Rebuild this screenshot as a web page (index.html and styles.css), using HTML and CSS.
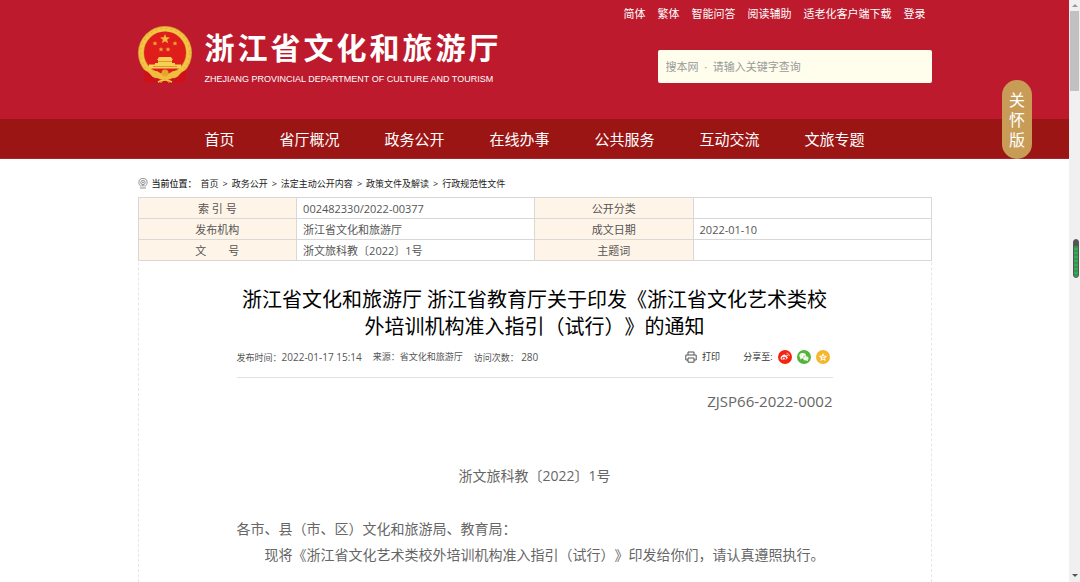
FILE: index.html
```html
<!DOCTYPE html>
<html lang="zh-CN">
<head>
<meta charset="utf-8">
<meta name="viewport" content="width=device-width, initial-scale=1">
<title>浙江省文化和旅游厅</title>
<link rel="stylesheet" href="styles.css">
</head>
<body>
<header class="header">
  <div class="container header-inner">
    <a class="brand" href="#">
      <svg class="emblem" viewBox="0 0 54 58" aria-hidden="true">
        <circle cx="27" cy="27" r="27" fill="#d9a030"/>
        <circle cx="27" cy="27" r="23.800" fill="none" stroke="#f3c445" stroke-width="4.500"/>
        <circle cx="27" cy="27" r="24.500" fill="none" stroke="#e0a835" stroke-width="1" stroke-dasharray="2 3"/>
        <circle cx="27" cy="26.500" r="21" fill="#df1e1c"/>
        <path d="M27 8l1.300 3.300 3.600.2-2.800 2.200 1 3.500L27 15.200l-3.100 2 1-3.500-2.800-2.200 3.600-.2z" fill="#f6b83c"/>
        <g fill="#f2a93a">
          <path id="s" d="M17 15l.7 1.600 1.800.1-1.400 1.100.5 1.700-1.600-1-1.600 1 .5-1.700-1.400-1.100 1.800-.1z"/>
          <use href="#s" x="20"/><use href="#s" x="6" y="6"/><use href="#s" x="13" y="6"/>
        </g>
        <path d="M21 31h12l2 3H19zM20 34h14v3H20zM17 37h20v2H17zM11 38.500h32v4H11z" fill="#f8cf55"/>
        <path d="M15 40.500h24M20 35.500h14" stroke="#d98b25" stroke-width=".8"/>
        <path d="M6 44l6 3 6 9-6 1-5-1z" fill="#cf1019"/>
        <path d="M48 44l-6 3-6 9 6 1 5-1z" fill="#cf1019"/>
        <path d="M10 46q8-3 12 1l5 3 5-3q4-4 12-1l-5 5-5-1-5 4 3 3H22l3-3-5-4-5 1z" fill="#f0bd3c"/>
        <circle cx="27" cy="47" r="3.500" fill="#e8a52e"/>
        <path d="M18 52l4 1-3 4M36 52l-4 1 3 4M23 57l4-4 4 4z" fill="#cf1019"/>
        <path d="M20 56q7-4 14 0" fill="none" stroke="#f5c941" stroke-width="1.500"/>
      </svg>
      <span class="brand-text">
        <span class="brand-name">浙江省文化和旅游厅</span>
        <span class="brand-en">ZHEJIANG PROVINCIAL DEPARTMENT OF CULTURE AND TOURISM</span>
      </span>
    </a>
    <div class="tools">
      <nav class="top-links" aria-label="快捷链接">
        <a href="#">简体</a><a href="#">繁体</a><a href="#">智能问答</a><a href="#">阅读辅助</a><a href="#">适老化客户端下载</a><a href="#">登录</a>
      </nav>
      <input class="search" type="text" aria-label="搜索" placeholder="搜本网&nbsp; ·&nbsp; 请输入关键字查询">
    </div>
  </div>
</header>
<nav class="main-nav" aria-label="主导航">
  <div class="container nav-list">
    <a href="#">首页</a><a href="#">省厅概况</a><a href="#">政务公开</a><a href="#">在线办事</a><a href="#">公共服务</a><a href="#">互动交流</a><a href="#">文旅专题</a>
  </div>
</nav>
<main class="container main">
  <nav class="crumbs" aria-label="当前位置">
    <svg class="pin" viewBox="0 0 10 11" fill="none" stroke="#777" stroke-width=".8" aria-hidden="true"><path d="M3.200 8.500C1.600 7.400.9 6 .9 4.500a4.100 4.100 0 0 1 8.200 0c0 1.500-.7 2.900-2.300 4"/><circle cx="5" cy="4.500" r="2.200"/><circle cx="5" cy="4.500" r=".6"/><path d="M3.500 7.800h3M2 10h6"/></svg>
    <span class="crumb-label">当前位置：</span>
    <a href="#">首页</a><span>&gt;</span><a href="#">政务公开</a><span>&gt;</span><a href="#">法定主动公开内容</a><span>&gt;</span><a href="#">政策文件及解读</a><span>&gt;</span><a href="#">行政规范性文件</a>
  </nav>
  <section class="sheet">
    <table class="info">
      <tr><th scope="row">索 引 号</th><td>002482330/2022-00377</td><th scope="row">公开分类</th><td></td></tr>
      <tr><th scope="row">发布机构</th><td>浙江省文化和旅游厅</td><th scope="row">成文日期</th><td>2022-01-10</td></tr>
      <tr><th scope="row">文&emsp;&emsp;号</th><td>浙文旅科教〔2022〕1号</td><th scope="row">主题词</th><td></td></tr>
    </table>
    <article class="article">
      <h1 class="title">浙江省文化和旅游厅 浙江省教育厅关于印发《浙江省文化艺术类校<br>外培训机构准入指引（试行）》的通知</h1>
      <div class="meta">
        <span>发布时间：<time class="num">2022-01-17 15:14</time></span>
        <span>来源：省文化和旅游厅</span>
        <span>访问次数： <span class="num">280</span></span>
        <button class="print" type="button">
          <svg class="printer" viewBox="0 0 12 12" fill="none" stroke="#555" stroke-width="1" aria-hidden="true"><path d="M3 4V1h6v3M3 9H.8V4h10.400v5H9"/><path d="M3 7h6v4.200H3z"/></svg>
          打印
        </button>
        <div class="share">
          <span>分享至:</span>
          <a href="#" aria-label="微博"><svg class="share-icon" viewBox="0 0 14 14"><circle cx="7" cy="7" r="7" fill="#f5230f"/><path d="M6.300 4.500c.7-.2 1 .3.8 1 1.200-.4 2 .1 1.700 1 1 .3 1.200 1.200.6 2.100-1.200 1.800-6.700 2.200-6.900-.3-.1-1.300 2-3.500 3.800-3.800z" fill="#fff"/><ellipse cx="6" cy="8.300" rx="2.300" ry="1.600" fill="#f5230f"/><circle cx="5.800" cy="8.400" r="1" fill="#fff"/><path d="M8.600 3.200a2.400 2.400 0 0 1 2.500 3M8.700 4.800a1 1 0 0 1 .9 1.100" fill="none" stroke="#fff" stroke-width=".7"/></svg></a>
          <a href="#" aria-label="微信"><svg class="share-icon" viewBox="0 0 14 14"><circle cx="7" cy="7" r="7" fill="#52b438"/><ellipse cx="5.700" cy="5.800" rx="3.300" ry="2.700" fill="#fff"/><path d="M3.500 7.500L3 9.500l2-1z" fill="#fff"/><ellipse cx="8.800" cy="8.300" rx="2.900" ry="2.400" fill="#fff" stroke="#52b438" stroke-width=".5"/><path d="M9.500 10.300l1.500.9-.3-1.600z" fill="#fff"/><g fill="#52b438"><circle cx="4.600" cy="5.100" r=".4"/><circle cx="6.800" cy="5.100" r=".4"/><circle cx="7.900" cy="7.800" r=".35"/><circle cx="9.700" cy="7.800" r=".35"/></g></svg></a>
          <a href="#" aria-label="收藏"><svg class="share-icon" viewBox="0 0 14 14"><circle cx="7" cy="7" r="7" fill="#f6b52c"/><path d="M7 2.900l1.200 2.700 3 .3-2.200 2 .6 3L7 9.400l-2.600 1.500.6-3-2.200-2 3-.3z" fill="#fff"/><path d="M5.500 6.300h3L6 8.400h2.600" fill="none" stroke="#f6b52c" stroke-width=".7"/></svg></a>
        </div>
      </div>
      <p class="code">ZJSP66-2022-0002</p>
      <p class="doc-no">浙文旅科教〔2022〕1号</p>
      <p class="text">各市、县（市、区）文化和旅游局、教育局：</p>
      <p class="text indent">现将《浙江省文化艺术类校外培训机构准入指引（试行）》印发给你们，请认真遵照执行。</p>
    </article>
  </section>
</main>
<button class="care" type="button">关怀版</button>
<div class="scrollbar" aria-hidden="true">
  <span class="arrow-up"></span>
  <span class="thumb"></span>
  <span class="arrow-down"></span>
</div>
<div class="gauge" aria-hidden="true"></div>
</body>
</html>
```
FILE: styles.css
```css
* { box-sizing: border-box; }
body {
  margin: 0;
  padding-right: 11px;
  min-height: 100vh;
  display: flex;
  flex-direction: column;
  background: #fff;
  color: #333;
  font-family: "Open Sans", "Noto Sans CJK SC", sans-serif;
  font-size: 11px;
  text-spacing-trim: space-all;
}
a { color: inherit; text-decoration: none; }
p, h1 { margin: 0; font-weight: 400; }
.container { width: 100%; max-width: 794px; margin: 0 auto; }

.header { background: #bd1a2d; color: #fff; }
.header-inner {
  display: flex;
  justify-content: space-between;
  align-items: flex-start;
  min-height: 119px;
}
.brand { display: flex; gap: 13px; padding-top: 26px; }
.emblem { width: 54px; height: 58px; }
.brand-text { display: flex; flex-direction: column; gap: 8px; }
.brand-name {
  font-family: "Noto Sans CJK SC", sans-serif;
  font-size: 30px;
  line-height: 40px;
  font-weight: 700;
  letter-spacing: 3px;
}
.brand-en {
  font-family: "Liberation Sans", Arial, sans-serif;
  font-size: 9px;
  line-height: 10px;
}
.tools { display: flex; flex-direction: column; align-items: flex-end; gap: 27px; padding-top: 5px; }
.top-links { display: flex; gap: 12px; padding-right: 6px; line-height: 18px; }
.search {
  width: 274px;
  height: 33px;
  padding: 0 8px;
  border: 0;
  border-radius: 2px;
  background: #fffeed;
  font: inherit;
}
.search::placeholder { color: #999; }

.main-nav { background: #9c1515; color: #fff; border-bottom: 1px solid #a9232b; }
.nav-list { display: flex; gap: 45px; padding: 1px 0 0 67px; font-size: 15px; line-height: 38px; }

.main { flex: 1; display: flex; flex-direction: column; }
.crumbs { display: flex; align-items: center; gap: 4px; height: 38px; padding-top: 10px; font-size: 9px; color: #222; }
.pin { width: 10px; height: 11px; }
.crumb-label { font-weight: 500; }
.sheet {
  flex: 1;
  border: 1px dashed #e6e6e6;
  border-width: 0 1px;
}
.info { width: calc(100% + 2px); margin: 0 -1px; table-layout: fixed; border-collapse: collapse; color: #555; }
.info th, .info td { height: 21px; padding: 1px 6px 0; border: 1px solid #d8d8d8; line-height: 18px; text-align: left; }
.info th { width: 20%; background: #fff4e8; font-weight: 400; text-align: center; }
.info td { width: 30%; }

.article { padding: 25px 98px 0; color: #666; }
.title { color: #000; font-size: 20px; line-height: 27px; text-align: center; white-space: nowrap; }
.meta {
  display: flex;
  align-items: center;
  gap: 11px;
  height: 38px;
  padding-bottom: 4px;
  border-bottom: 1px solid #e2e2e2;
  color: #555;
  font-size: 9px;
}
.num { font-size: 10px; }
.print {
  display: flex;
  align-items: center;
  gap: 5px;
  margin-left: auto;
  padding: 0;
  border: 0;
  background: none;
  color: #333;
  font: inherit;
}
.printer { width: 12px; height: 12px; }
.share { display: flex; align-items: center; gap: 5px; margin-left: 12px; padding-right: 3px; color: #333; }
.share a { display: flex; }
.share-icon { width: 14px; height: 14px; }
.code { padding-top: 10px; font-size: 15px; line-height: 26px; text-align: right; }
.doc-no { padding: 49px 0 27px; font-size: 14px; line-height: 26px; text-align: center; }
.text { font-size: 14px; line-height: 26px; }
.indent { text-indent: 2em; }

.care {
  position: fixed;
  top: 80px;
  right: 48px;
  width: 30px;
  height: 79px;
  padding: 0 7px;
  border: 0;
  border-radius: 15px;
  background: #c89c56;
  color: #fff;
  font: inherit;
  font-size: 16px;
  line-height: 20px;
}
.scrollbar { position: fixed; top: 0; right: 0; bottom: 0; width: 11px; background: #f0f0f0; }
.arrow-up, .arrow-down { position: absolute; left: 3px; border: 3px solid transparent; }
.arrow-up { top: 1px; border-bottom-color: #999; }
.arrow-down { bottom: 2px; border-top-color: #555; }
.thumb { position: absolute; top: 11px; left: 1px; width: 9px; height: 80px; background: #c1c1c1; }
.gauge {
  position: fixed;
  top: 239px;
  right: 1px;
  width: 6px;
  height: 39px;
  border: 1px solid #555;
  border-radius: 3px;
  background: linear-gradient(#555 6px, transparent 6px), repeating-linear-gradient(#2fae58 0 2px, #3a9152 2px 4px);
}
```
